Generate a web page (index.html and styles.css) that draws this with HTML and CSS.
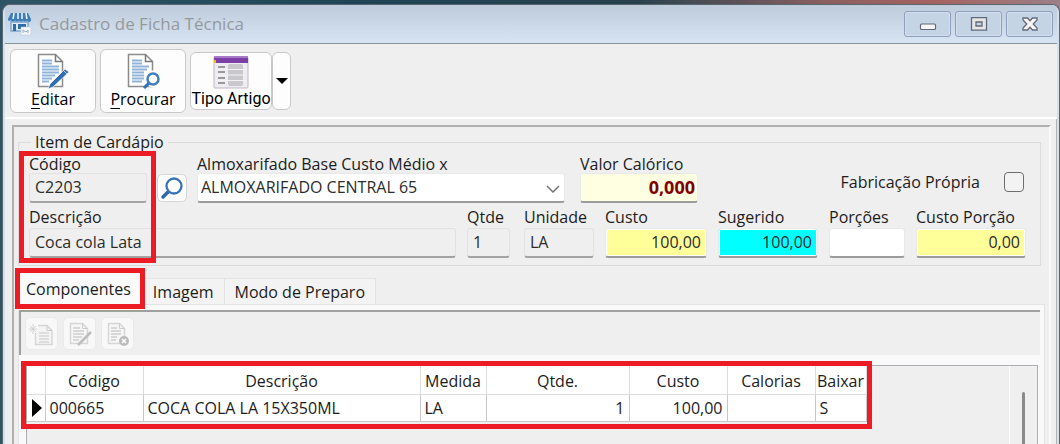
FILE: index.html
```html
<!DOCTYPE html>
<html lang="pt-BR">
<head>
    <meta charset="utf-8" />
    <title>Cadastro de Ficha Técnica</title>
    <meta content="width=device-width, initial-scale=1" name="viewport" />
    <link rel="stylesheet" href="styles.css">
</head>
<body>
    <div class="window">
        <header class="titlebar">
            <svg class="app-icon" width="24" height="24" viewBox="0 0 24 24">
                <path d="M3 1h17l3 6H0z" fill="#3f7db8"/>
                <path d="M6 1L5 8M10 1v7M14 1v7M18 1l1 7" stroke="#eaf2fa" stroke-width="1.6"/>
                <path d="M0 7h23v1a2 2 0 0 1-4 0 2 2 0 0 1-4 0 2 2 0 0 1-4 0 2 2 0 0 1-4 0 2 2 0 0 1-4 0 2 2 0 0 1-3 0z" fill="#3f7db8"/>
                <path d="M3 10h17v9H3z" fill="#dfeaf5" stroke="#7ba5ce" stroke-width="1.4"/>
                <path d="M5 12h3v7H5zM10 12h8v5h-8z" fill="#2c6ca9"/>
                <path d="M13 15h10v8H13z" fill="#f3f6fa" stroke="#c3ced9" stroke-width=".6"/>
                <path d="M15 21v-3l3 2 2-2v3" fill="none" stroke="#9aabbd"/>
            </svg>
            <h1 class="title">Cadastro de Ficha Técnica</h1>
            <div class="win-buttons">
                <button type="button" class="win-btn" aria-label="Minimizar">
                    <svg width="18" height="14" viewBox="0 0 18 14"><rect x="1.5" y="7" width="15" height="5.5" rx="1" fill="#f8f8f8" stroke="#63687a" stroke-width="1.2"/></svg>
                </button>
                <button type="button" class="win-btn" aria-label="Maximizar">
                    <svg width="18" height="14" viewBox="0 0 18 14"><path d="M1.5 .7h15v12.5h-15zM6 5v4h6V5z" fill="#e6e6e6" fill-rule="evenodd" stroke="#63687a" stroke-width="1.3"/></svg>
                </button>
                <button type="button" class="win-btn" aria-label="Fechar">
                    <svg width="18" height="14" viewBox="0 0 18 14"><path d="M2 1h4.5L9 3.8 11.5 1H16v2l-3.8 4L16 11v2h-4.5L9 10.2 6.5 13H2v-2l3.8-4L2 3z" fill="#f8f8f8" stroke="#63687a" stroke-width="1.3"/></svg>
                </button>
            </div>
        </header>

        <div class="toolbar">
            <button type="button" class="tool">
                <svg width="34" height="36" viewBox="0 0 34 36">
                    <path d="M2.5 1.5h17l7 7v25h-24z" fill="#fff" stroke="#8b8b8b" stroke-width="1.5"/>
                    <path d="M19.5 1.5v7h7" fill="none" stroke="#777" stroke-width="1.5"/>
                    <path d="M6 7.5h10M6 10.5h10M6 13.5h17M6 16.5h17M6 19.5h17M6 22.5h13M6 25.5h10M6 28.5h7" stroke="#8fb3d9" stroke-width="2"/>
                    <path d="M29 16l4 3-16 15-5 2 2-5z" fill="#2f6fb3" stroke="#fff" stroke-width=".7"/>
                    <path d="M28 18l3 3" stroke="#b8d0e8"/>
                </svg>
                <span class="tool-text"><u>E</u>ditar</span>
            </button>
            <button type="button" class="tool">
                <svg width="34" height="36" viewBox="0 0 34 36">
                    <path d="M2.5 1.5h17l7 7v25h-24z" fill="#fff" stroke="#8b8b8b" stroke-width="1.5"/>
                    <path d="M19.5 1.5v7h7" fill="none" stroke="#777" stroke-width="1.5"/>
                    <path d="M6 7.5h10M6 10.5h10M6 13.5h17M6 16.5h15M6 19.5h12M6 22.5h12M6 25.5h12M6 28.5h10" stroke="#8fb3d9" stroke-width="2"/>
                    <circle cx="27" cy="26" r="6" fill="#fff" stroke="#fff" stroke-width="5"/>
                    <path d="M23 30l-5 5" stroke="#2f6fb3" stroke-width="3"/>
                    <circle cx="27" cy="26" r="5.5" fill="#fff" stroke="#3f7fbd" stroke-width="2.5"/>
                </svg>
                <span class="tool-text"><u>P</u>rocurar</span>
            </button>
            <div class="split">
                <button type="button" class="tool tool-small">
                    <svg width="36" height="34" viewBox="0 0 36 34">
                        <rect x="1" y="2" width="34" height="31" rx="1" fill="#eeecf1" stroke="#bdb9c6"/>
                        <rect x="1" y="1" width="34" height="7" fill="#7b3fa5"/>
                        <path d="M1 2h34" stroke="#a77bc8" stroke-width="2"/>
                        <path d="M1 5v3h2V5z" fill="#f2c200"/>
                        <path d="M5 12h7M5 17h7M5 23h7M5 28h7" stroke="#9a9a9a" stroke-width="2"/>
                        <rect x="15" y="9" width="15" height="22" rx="2" fill="#c8c8cc"/>
                        <path d="M3 14.5h30M3 20h30M3 25.5h30" stroke="#f4f2f6"/>
                    </svg>
                    <span class="tool-text">Tipo Artigo</span>
                </button>
                <button type="button" class="tool tool-drop" aria-label="Mais opções">
                    <svg width="12" height="6" viewBox="0 0 12 6"><path d="M0 0h12L6 6z"/></svg>
                </button>
            </div>
        </div>

        <main class="content">
            <div class="panel">
                <fieldset class="item">
                    <legend>Item de Cardápio</legend>
                    <div class="row-top">
                        <div class="field field-codigo">
                            <label for="codigo">Código</label>
                            <input id="codigo" type="text" class="box readonly" value="C2203" readonly>
                        </div>
                        <button type="button" class="search" aria-label="Procurar código">
                            <svg width="24" height="24" viewBox="0 0 24 24">
                                <path d="M8 16l-5 5" stroke="#2f68a5" stroke-width="3.5" stroke-linecap="round"/>
                                <circle cx="14" cy="10" r="7.5" fill="#fff" stroke="#3874b2" stroke-width="2.3"/>
                            </svg>
                        </button>
                        <div class="field field-almox">
                            <label for="almox">Almoxarifado Base Custo Médio x</label>
                            <div class="select-wrap">
                                <select id="almox" class="box">
                                    <option>ALMOXARIFADO CENTRAL 65</option>
                                </select>
                                <svg class="chevron" width="14" height="8" viewBox="0 0 14 8"><path d="M1 1l6 6 6-6" fill="none" stroke="#777" stroke-width="1.5"/></svg>
                            </div>
                        </div>
                        <div class="field field-valor">
                            <label for="valor">Valor Calórico</label>
                            <input id="valor" type="text" class="box num calorico" value="0,000">
                        </div>
                        <label class="check">Fabricação Própria <input type="checkbox"></label>
                    </div>
                    <div class="row-bottom">
                        <div class="field">
                            <label for="descricao">Descrição</label>
                            <input id="descricao" type="text" class="box readonly" value="Coca cola Lata" readonly>
                        </div>
                        <div class="field field-qtde">
                            <label for="qtde">Qtde</label>
                            <input id="qtde" type="text" class="box readonly" value="1" readonly>
                        </div>
                        <div class="field">
                            <label for="unidade">Unidade</label>
                            <input id="unidade" type="text" class="box readonly" value="LA" readonly>
                        </div>
                        <div class="field">
                            <label for="custo">Custo</label>
                            <input id="custo" type="text" class="box num yellow" value="100,00">
                        </div>
                        <div class="field">
                            <label for="sugerido">Sugerido</label>
                            <input id="sugerido" type="text" class="box num cyan" value="100,00">
                        </div>
                        <div class="field">
                            <label for="porcoes">Porções</label>
                            <input id="porcoes" type="text" class="box">
                        </div>
                        <div class="field">
                            <label for="porcao">Custo Porção</label>
                            <input id="porcao" type="text" class="box num yellow" value="0,00">
                        </div>
                    </div>
                    <span class="mark mark-item"></span>
                </fieldset>

                <div class="tabs" role="tablist">
                    <button type="button" role="tab" class="tab active" aria-selected="true">Componentes<span class="mark mark-tab"></span></button>
                    <button type="button" role="tab" class="tab">Imagem</button>
                    <button type="button" role="tab" class="tab">Modo de Preparo</button>
                </div>

                <section class="page">
                    <div class="page-tools">
                        <button type="button" class="mini" aria-label="Novo" disabled>
                            <svg width="26" height="26" viewBox="0 0 26 26">
                                <path d="M9 4.5h9l5 5v14H6.5V12" fill="#f4f4f4" stroke="#d6d6d6" stroke-width="1.5"/>
                                <path d="M18 4.5v5h5" fill="none" stroke="#ccc"/>
                                <path d="M10 12h10M10 15h10M10 18h10M10 21h10" stroke="#dedede" stroke-width="2"/>
                                <path d="M4 3v10M0 8h8M1 5l6 6M7 5l-6 6" stroke="#d2d2d2"/>
                            </svg>
                        </button>
                        <button type="button" class="mini" aria-label="Editar componente" disabled>
                            <svg width="26" height="26" viewBox="0 0 26 26">
                                <path d="M3.5 2.5h12l5 5v15h-17z" fill="#f6f6f6" stroke="#d6d6d6" stroke-width="1.5"/>
                                <path d="M15.5 2.5v5h5" fill="none" stroke="#ccc"/>
                                <path d="M6 7h7M6 10h11M6 13h11M6 16h9M6 19h6" stroke="#d8d8d8" stroke-width="2"/>
                                <path d="M24 11L11 24" stroke="#bdbdbd" stroke-width="2.5"/>
                            </svg>
                        </button>
                        <button type="button" class="mini" aria-label="Excluir" disabled>
                            <svg width="26" height="26" viewBox="0 0 26 26">
                                <path d="M3.5 2.5h11l5 5v15h-16z" fill="#f6f6f6" stroke="#d6d6d6" stroke-width="1.5"/>
                                <path d="M14.5 2.5v5h5" fill="none" stroke="#ccc"/>
                                <path d="M6 7h6M6 10h10M6 13h10M6 16h6M6 19h5" stroke="#d8d8d8" stroke-width="2"/>
                                <circle cx="19" cy="20" r="5" fill="#bbb"/>
                                <path d="M17 18l4 4M21 18l-4 4" stroke="#fff" stroke-width="1.5"/>
                            </svg>
                        </button>
                    </div>
                    <div class="grid-panel">
                        <div class="grid-box">
                            <table class="grid">
                                <colgroup>
                                    <col class="c-mark"><col class="c-codigo"><col class="c-desc"><col class="c-medida">
                                    <col class="c-qtde"><col class="c-custo"><col class="c-cal"><col class="c-baixar">
                                </colgroup>
                                <thead>
                                    <tr><th></th><th>Código</th><th>Descrição</th><th>Medida</th><th>Qtde.</th><th>Custo</th><th>Calorias</th><th>Baixar</th></tr>
                                </thead>
                                <tbody>
                                    <tr>
                                        <td class="pointer"><svg width="10" height="18" viewBox="0 0 10 18"><path d="M0 0l10 9-10 9z"/></svg></td>
                                        <td>000665</td><td>COCA COLA LA 15X350ML</td><td>LA</td><td class="num">1</td><td class="num">100,00</td><td></td><td>S</td>
                                    </tr>
                                </tbody>
                            </table>
                            <span class="mark mark-grid"></span>
                        </div>
                        <div class="scroll"><div class="thumb"></div></div>
                    </div>
                </section>
            </div>
        </main>
    </div>
</body>
</html>
```

FILE: styles.css
```css
*{
    box-sizing:border-box;
}
body{
    margin:0;
    min-height:100vh;
    display:flex;
    padding:4px 0 0 2px;
    background:linear-gradient(90deg,#2d5566 0,#1f4554 35%,#28424f 60%,#8c5f60 78%,#a5625f 88%,#9a8087 100%);
    font:16px/18px "Open Sans","Noto Sans",sans-serif;
    color:#1c1c1c;
}
button,input,select{
    font:inherit;
    color:inherit;
}
.window{
    flex:1;
    display:flex;
    flex-direction:column;
    min-width:0;
    border:1px solid #5c6670;
    border-bottom:0;
    border-radius:8px 8px 0 0;
    padding:0 2px;
    background:#d3e0ee;
    overflow:hidden;
}
.titlebar{
    display:flex;
    align-items:center;
    height:39px;
    padding:0 4px 0 3px;
    background:linear-gradient(#bdcbda,#d6e4f3);
    border-bottom:1px solid #8a9299;
}
.title{
    margin:0 auto 0 7px;
    font-size:17px;
    font-weight:400;
    line-height:20px;
    color:#96999d;
}
.win-buttons{
    display:flex;
    gap:4px;
}
.win-btn{
    display:flex;
    align-items:center;
    justify-content:center;
    width:47px;
    height:26px;
    padding:0;
    border:1px solid #8f9fbb;
    border-radius:3px;
    background:#c5d4e4;
    box-shadow:inset 0 0 0 1px #d3dfec;
}
.toolbar{
    display:flex;
    align-items:flex-start;
    gap:4px;
    padding:5px 5px 4px;
    height:75px;
    background:#efefef;
    border-bottom:2px solid #fff;
}
.tool{
    display:flex;
    flex-direction:column;
    align-items:center;
    justify-content:center;
    width:86px;
    height:64px;
    padding:0;
    border:1px solid #c9c9c9;
    border-radius:6px;
    background:#fdfdfd;
    color:#000;
}
.tool-text{
    line-height:20px;
}
.tool-text u{
    text-underline-offset:3px;
}
.split{
    display:flex;
    padding-top:3px;
}
.tool-small{
    width:82px;
    height:58px;
    padding-top:2px;
    font-family:Roboto,"Open Sans",sans-serif;
}
.tool-drop{
    width:19px;
    height:58px;
}
.content{
    flex:1;
    display:flex;
    flex-direction:column;
    padding:6px 5px 0 7px;
    border-right:1px solid #b5b5b5;
    background:#efefef;
}
.panel{
    flex:1;
    display:flex;
    flex-direction:column;
    padding:6px 4px 0;
    border:2px solid #b0b0b0;
    border-right-color:#fbfbfb;
    border-bottom:0;
}
.item{
    position:relative;
    margin:0 4px 0 0;
    padding:4px 14px 7px 10px;
    min-width:0;
    border:1px solid #dcdcdc;
}
.item legend{
    margin-left:2px;
    padding:0 4px;
}
.row-top{
    display:flex;
    align-items:flex-end;
    gap:10px;
}
.row-bottom{
    display:grid;
    grid-template-columns:minmax(0,1fr) 46px 70px 102px 100px 76px 110px;
    gap:11px;
    padding-top:5px;
}
.row-bottom label{
    margin-bottom:2px;
}
.field{
    display:flex;
    flex-direction:column;
    white-space:nowrap;
}
.field-codigo{
    width:118px;
}
.field-almox{
    flex:0 1 368px;
}
.field-valor{
    width:118px;
    margin-left:5px;
}
.field-qtde .box{
    width:43px;
}
.box{
    width:100%;
    height:30px;
    padding:0 5px 2px;
    border:1px solid #e9e9e9;
    border-bottom:2px solid #9b9b9b;
    border-radius:3px;
    background:#fff;
    color:#2b2b2b;
}
.readonly{
    background:#efefef;
    border-color:#e2e2e2 #e2e2e2 #a3a3a3;
}
.num{
    text-align:right;
}
.calorico{
    padding-right:2px;
    background:#ffffe1;
    color:#800000;
    font-size:18px;
    font-weight:700;
}
.yellow{
    background:#ffff99;
    box-shadow:inset 0 0 0 1px #fff;
}
.cyan{
    background:#00ffff;
    box-shadow:inset 0 0 0 1px #fff;
}
.search{
    display:flex;
    align-items:center;
    justify-content:center;
    width:30px;
    height:28px;
    margin-bottom:1px;
    padding:0;
    border:1px solid #d5d5d5;
    border-radius:5px;
    background:#fdfdfd;
}
.select-wrap{
    position:relative;
}
.select-wrap select{
    display:block;
    appearance:none;
    padding-left:3px;
}
.chevron{
    position:absolute;
    right:5px;
    top:12px;
    pointer-events:none;
}
.check{
    display:flex;
    align-items:center;
    gap:24px;
    margin:0 0 11px auto;
}
.check input{
    appearance:none;
    width:20px;
    height:20px;
    margin:0 2px 0 0;
    border:1px solid #6e6e6e;
    border-radius:4px;
    background:#f3f3f3;
}
.mark{
    position:absolute;
    border:5px solid #ed1c24;
    pointer-events:none;
}
.mark-item{
    left:0;
    top:0;
    width:137px;
    bottom:2px;
}
.mark-tab{
    inset:-5px -2px -5px -4px;
}
.mark-grid{
    inset:-5px -5px -7px -6px;
}
.tabs{
    display:flex;
    align-items:flex-end;
    padding:7px 0 0 1px;
}
.tab{
    position:relative;
    height:26px;
    padding:0 10px;
    border:1px solid #e3e3e3;
    border-width:1px 1px 0 0;
    background:#f3f3f3;
}
.active{
    height:31px;
    padding:0 12px 0 7px;
    border:0;
    background:#fafafa;
    z-index:1;
}
.page{
    flex:1;
    display:flex;
    flex-direction:column;
    border:1px solid #e3e3e3;
    border-bottom:0;
    padding:5px 4px 0 0;
    background:#f9f9f9;
}
.page-tools{
    display:flex;
    gap:5px;
    height:45px;
    padding:5px 4px;
    border-top:2px solid #a0a0a0;
    border-left:2px solid #a0a0a0;
    background:#efefef;
}
.mini{
    display:flex;
    align-items:center;
    justify-content:center;
    width:33px;
    height:33px;
    padding:0;
    border:1px solid #eaeaea;
    border-radius:5px;
    background:#f8f8f8;
}
.grid-panel{
    flex:1;
    display:flex;
    justify-content:space-between;
    margin:10px 2px 0 7px;
    border:1px solid #adadb3;
    border-bottom:0;
    background:#efefef;
}
.grid-box{
    position:relative;
    align-self:flex-start;
}
.grid{
    table-layout:fixed;
    width:839px;
    border-collapse:collapse;
    background:#fff;
}
.grid th,.grid td{
    height:27px;
    padding:0 4px;
    border-right:1px solid #c8c8c8;
    border-bottom:1px solid #c8c8c8;
    font-weight:400;
    text-align:left;
    white-space:nowrap;
}
.grid th{
    height:28px;
    padding:2px 0 0;
    text-align:center;
    border-color:#dcdcdc;
}
.grid .num{
    text-align:right;
}
.grid .pointer{
    padding:0 0 0 5px;
}
.pointer svg{
    display:block;
}
.c-mark{width:18px;}
.c-codigo{width:98px;}
.c-desc{width:277px;}
.c-medida{width:66px;}
.c-qtde{width:143px;}
.c-custo{width:98px;}
.c-cal{width:88px;}
.c-baixar{width:51px;}
.scroll{
    width:28px;
    padding:26px 12px 0 0;
    border-left:1px solid #fff;
    display:flex;
    justify-content:flex-end;
}
.thumb{
    width:3px;
    background:#8a8a8a;
    border-radius:2px 2px 0 0;
}
```
